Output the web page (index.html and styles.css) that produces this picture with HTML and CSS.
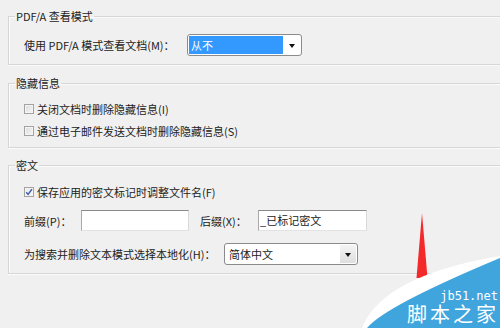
FILE: index.html
```html
<!DOCTYPE html>
<html>
<head>
<meta charset="utf-8">
<link rel="stylesheet" href="styles.css">
</head>
<body>
<div class="page">
  <fieldset class="group g1">
    <legend>PDF/A 查看模式</legend>
    <div class="row">
      <span class="label w-pdfa">使用 PDF/A 模式查看文档(M)：</span>
      <div class="select s-pdfa">
        <span class="sel-text highlighted">从不</span>
        <span class="sel-btn"><span class="arrow"></span></span>
      </div>
    </div>
  </fieldset>

  <fieldset class="group g2">
    <legend>隐藏信息</legend>
    <div class="row check-row">
      <span class="checkbox"></span>
      <span class="label">关闭文档时删除隐藏信息(I)</span>
    </div>
    <div class="row check-row">
      <span class="checkbox"></span>
      <span class="label">通过电子邮件发送文档时删除隐藏信息(S)</span>
    </div>
  </fieldset>

  <fieldset class="group g3">
    <legend>密文</legend>
    <div class="row check-row">
      <span class="checkbox checked"><svg width="8" height="8" viewBox="0 0 8 8"><path d="M1.2 4.2 L3.1 6.4 L6.9 1.2" fill="none" stroke="#3f63a8" stroke-width="1.5"/></svg></span>
      <span class="label">保存应用的密文标记时调整文件名(F)</span>
    </div>
    <div class="row input-row">
      <span class="label w-prefix">前缀(P)：</span>
      <span class="textbox tb1"></span>
      <span class="label w-suffix">后缀(X)：</span>
      <span class="textbox tb2">_已标记密文</span>
    </div>
    <div class="row select-row">
      <span class="label w-locale">为搜索并删除文本模式选择本地化(H)：</span>
      <div class="select s-locale">
        <span class="sel-text">简体中文</span>
        <span class="sel-btn grey"><span class="arrow"></span></span>
      </div>
    </div>
  </fieldset>

  <div class="watermark">
    <svg class="wm-shape" width="140" height="128" viewBox="0 0 140 128">
      <path d="M62 13 L67.5 78 L56.5 78 Z" fill="#f42a2a"/>
      <path d="M2 128 Q22 76 140 56 L140 128 Z" fill="#ffffff"/>
      <path d="M7 128 Q25 106 140 58 L140 128 Z" fill="#40a5dd"/>
    </svg>
    <div class="wm-url">jb51.net</div>
    <div class="wm-name">脚本之家</div>
  </div>
</div>
</body>
</html>
```

FILE: styles.css
```css
html, body {
  margin: 0;
  padding: 0;
}
body {
  width: 500px;
  height: 328px;
  overflow: hidden;
  background: #f0f0f0;
  font-family: "Noto Sans CJK SC", "Noto Sans", sans-serif;
  font-size: 11px;
  color: #222222;
}
.page {
  position: relative;
  width: 500px;
  height: 328px;
  overflow: hidden;
  padding-top: 8px;
  box-sizing: border-box;
}
.group {
  width: 620px;
  margin: 0 0 0 8px;
  padding: 0 0 0 15px;
  border: 1px solid #d6d6d6;
  box-shadow: inset 1px 1px 0 #fbfbfb, 0 1px 0 #fbfbfb;
  box-sizing: border-box;
  min-width: 0;
}
.group legend {
  padding: 0 1px;
  margin-left: -9px;
  line-height: 16px;
  height: 16px;
  font-size: 11px;
  color: #222222;
}
.g1 { padding-bottom: 8px; }
.g2 { margin-top: 10px; padding-bottom: 5px; }
.g3 { margin-top: 9px; padding-bottom: 8px; }

.row {
  display: flex;
  align-items: center;
}
.label {
  white-space: nowrap;
  line-height: 14px;
}
.g1 .row { margin-top: 10px; height: 22px; }
.w-pdfa { width: 163px; flex: 0 0 163px; }

.select {
  display: flex;
  box-sizing: border-box;
  height: 22px;
  border: 1px solid #8b8b8b;
  border-radius: 3px;
  background: #ffffff;
  padding: 1px;
}
.s-pdfa { width: 115px; }
.s-locale { width: 134px; }
.sel-text {
  flex: 1;
  line-height: 18px;
  padding-left: 3px;
  font-size: 11px;
}
.sel-text.highlighted {
  background: #3399ff;
  color: #ffffff;
  margin-right: 1px;
  padding-left: 2px;
}
.sel-btn {
  width: 16px;
  display: flex;
  align-items: center;
  justify-content: center;
}
.sel-btn.grey {
  background: linear-gradient(#f4f4f4, #dedede);
  border-radius: 0 2px 2px 0;
}
.arrow {
  width: 0;
  height: 0;
  border-left: 3.5px solid transparent;
  border-right: 3.5px solid transparent;
  border-top: 4px solid #111;
  margin-top: 1px;
}

.g2 .check-row { height: 22px; }
.g2 .check-row:first-of-type { margin-top: 7px; }
.checkbox {
  box-sizing: border-box;
  width: 10px;
  height: 10px;
  border: 1px solid #a3a3a3;
  background: linear-gradient(135deg, #dcdcdc, #f6f6f6);
  box-shadow: inset 0 0 0 1px #f4f4f4;
  margin-right: 3px;
  margin-left: 0;
  display: flex;
  align-items: center;
  justify-content: center;
  flex: 0 0 auto;
}
.checkbox.checked {
  background: linear-gradient(135deg, #e8e8e8, #fafafa);
}
.checkbox.checked svg { display: block; }

.g3 .check-row { margin-top: 8px; height: 22px; }
.input-row { margin-top: 7px; height: 21px; }
.w-prefix { width: 57px; flex: 0 0 57px; }
.w-suffix { width: 58px; flex: 0 0 58px; margin-left: 11px; }
.textbox {
  box-sizing: border-box;
  height: 21px;
  background: #ffffff;
  border: 1px solid;
  border-color: #8a8a8a #d9d9d9 #e2e2e2 #a9a9a9;
  line-height: 19px;
  padding-left: 1px;
  white-space: nowrap;
}
.tb1 { width: 108px; }
.tb2 { width: 109px; }
.select-row { margin-top: 12px; height: 22px; }
.w-locale { width: 200px; flex: 0 0 200px; }

.watermark {
  position: absolute;
  left: 360px;
  top: 200px;
  width: 140px;
  height: 128px;
}
.wm-shape {
  display: block;
}
.wm-url {
  position: absolute;
  right: 2px;
  top: 89px;
  font-family: "DejaVu Sans Mono", monospace;
  font-size: 12px;
  line-height: 14px;
  color: #ffffff;
}
.wm-name {
  position: absolute;
  right: 1px;
  top: 104px;
  font-size: 20px;
  letter-spacing: 3px;
  line-height: 20px;
  color: #ffffff;
  white-space: nowrap;
}
```
